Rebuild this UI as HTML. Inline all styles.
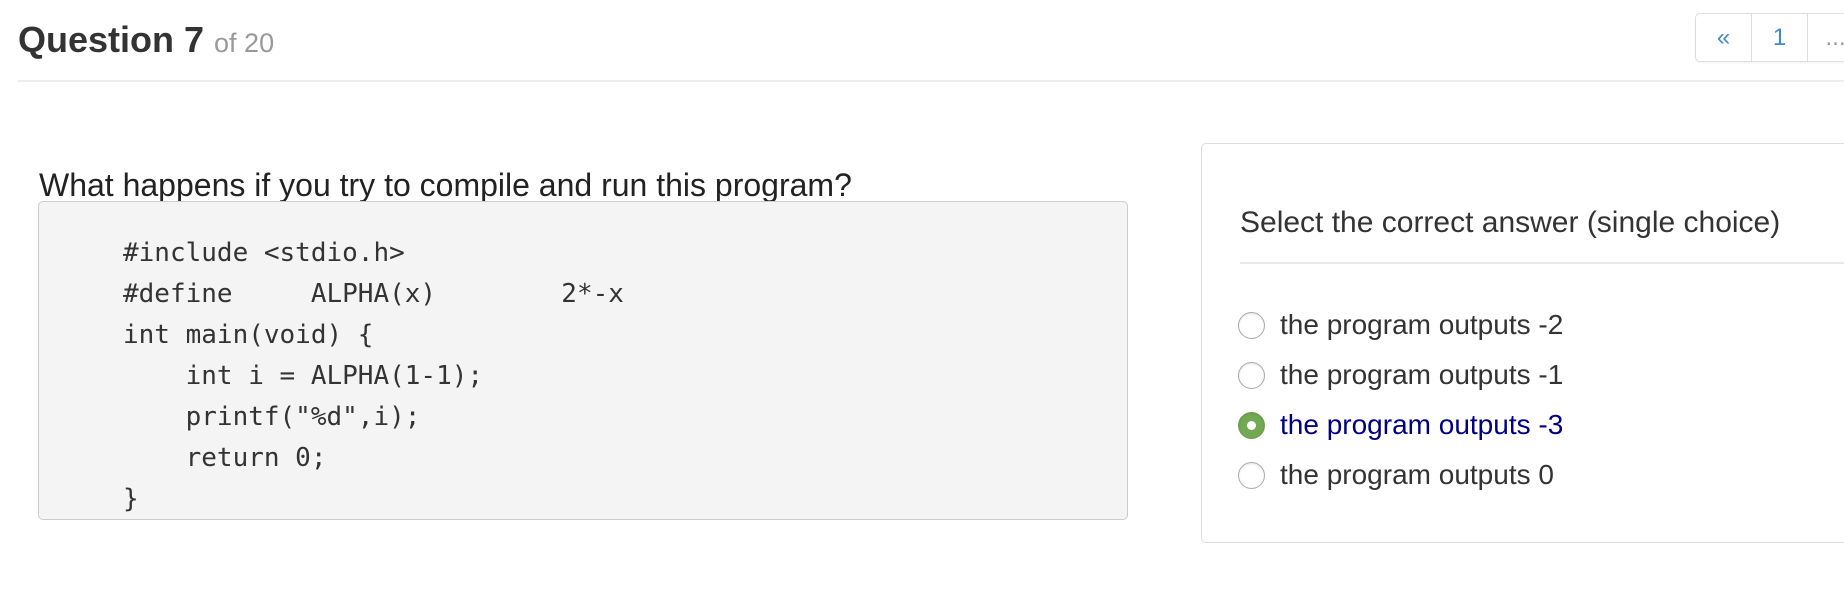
<!DOCTYPE html>
<html><head><meta charset="utf-8"><style>
body{margin:0;width:1844px;height:612px;background:#fff;font-family:"Liberation Sans",Arial,sans-serif;position:relative;overflow:hidden;color:#333}
.abs{position:absolute;white-space:nowrap}
h1{position:absolute;left:18px;top:20px;margin:0;font-size:36px;font-weight:bold;color:#333;line-height:40px}
h1 small{font-size:27px;font-weight:normal;color:#999}
.hr1{position:absolute;left:18px;right:0;top:80px;height:2px;background:#eee}
.pag{position:absolute;left:1695px;top:13px;height:47px;border:1px solid #ddd;border-radius:5px;display:flex;box-shadow:0 1px 2px rgba(0,0,0,.05)}
.pag div{width:55px;text-align:center;line-height:47px;font-size:24px;color:#428bca;border-right:1px solid #ddd}
.pag div:last-child{border-right:none;color:#999}
.q{left:39px;top:166px;font-size:32px;color:#222;line-height:38px}
.code{position:absolute;left:38px;top:201px;width:1090px;height:319px;background:#f4f4f4;border:1px solid #ccc;border-radius:5px;box-sizing:border-box}
pre{position:absolute;left:84px;top:31px;margin:0;font-family:"DejaVu Sans Mono","Liberation Mono",monospace;font-size:26px;line-height:41px;color:#333}
.panel{position:absolute;left:1201px;top:143px;width:700px;height:400px;border:1px solid #ddd;border-radius:5px;box-sizing:border-box}
.sel{left:1240px;top:205px;font-size:30px;line-height:36px;color:#333}
.hr2{position:absolute;left:1240px;right:0;top:262px;height:2px;background:#e8e8e8}
.opt{left:1280px;font-size:28px;line-height:34px;color:#333}
.r{position:absolute;left:1238px;width:25px;height:25px;border:1px solid #aaa;border-radius:50%;background:#fff;box-shadow:inset 0 1px 2px rgba(0,0,0,.1)}
.r.on{background:#74a954;border-color:#6a9d4c}
.r.on:after{content:"";position:absolute;left:8px;top:8px;width:9px;height:9px;border-radius:50%;background:#fff}
</style></head><body>
<h1>Question 7 <small>of 20</small></h1>
<div class="hr1"></div>
<div class="pag"><div>«</div><div>1</div><div>...</div></div>
<div class="abs q">What happens if you try to compile and run this program?</div>
<div class="code"><pre>#include &lt;stdio.h&gt;
#define     ALPHA(x)        2*-x
int main(void) {
    int i = ALPHA(1-1);
    printf("%d",i);
    return 0;
}</pre></div>
<div class="panel"></div>
<div class="abs sel">Select the correct answer (single choice)</div>
<div class="hr2"></div>
<div class="r" style="top:312px"></div><div class="abs opt" style="top:308px">the program outputs -2</div>
<div class="r" style="top:362px"></div><div class="abs opt" style="top:358px">the program outputs -1</div>
<div class="r on" style="top:412px"></div><div class="abs opt" style="top:408px;color:#000080">the program outputs -3</div>
<div class="r" style="top:462px"></div><div class="abs opt" style="top:458px">the program outputs 0</div>
</body></html>
